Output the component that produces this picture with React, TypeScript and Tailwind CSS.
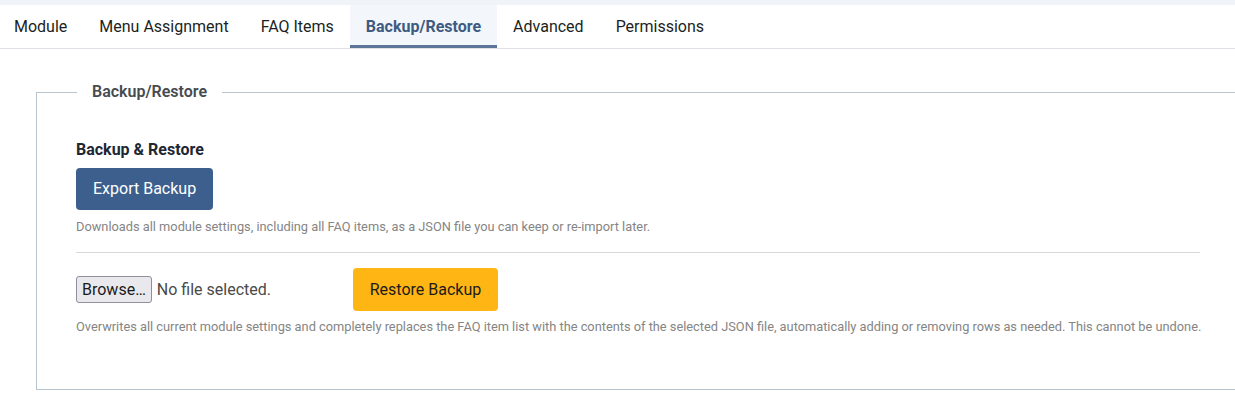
import { useState } from "react";

const tabs = ["Module", "Menu Assignment", "FAQ Items", "Backup/Restore", "Advanced", "Permissions"];

export default function App() {
  const [active, setActive] = useState("Backup/Restore");

  return (
    <div className="w-[1235px] h-[397px] overflow-hidden bg-white font-['Roboto',sans-serif] text-[#22262a]">
      <div className="h-[5px] bg-[#f0f4f9]" />

      {/* tabs */}
      <nav className="flex h-[44px] border-b border-[#dfe3e7]">
        {tabs.map((t, i) => {
          const isActive = t === active;
          return (
            <button
              key={t}
              onClick={() => setActive(t)}
              className={`h-[43px] pt-[3px] px-4 text-[16px] border-b-[3px] ${i === 0 ? "-ml-[2px]" : ""} ${
                isActive
                  ? "bg-[#f3f6fa] border-[#5b7497] text-[#3e5b82] font-bold"
                  : "border-transparent text-[#1b1f23]"
              }`}
            >
              {t}
            </button>
          );
        })}
      </nav>

      {/* backup panel */}
      <fieldset className="mt-[31px] ml-[36px] w-[1240px] border border-[#b9c6d0] pl-[39px] pr-[39px] pt-[34px] pb-[53px]">
        <legend className="ml-[1px] px-[15px] text-[16px] leading-6 font-semibold text-[#464b50]">Backup/Restore</legend>

        <h3 className="text-[16px] leading-6 font-bold text-[#1f2733]">Backup &amp; Restore</h3>
        <button className="mt-[6px] h-[42px] px-[17px] rounded-[4px] bg-[#3d5f8d] text-white text-[16px]">
          Export Backup
        </button>
        <p className="mt-[7px] text-[12.8px] leading-[19px] text-[#858585]">
          Downloads all module settings, including all FAQ items, as a JSON file you can keep or re-import later.
        </p>

        <hr className="mt-[16px] w-[1124px] border-t border-[#d6d9dc]" />

        <div className="mt-[15px] flex items-center">
          <div className="flex items-center w-[277px]">
            <span className="h-[27px] px-[5px] flex items-center border border-[#8f8f9d] rounded-[3px] bg-[#e9e9ed] text-[16px] text-[#1b1b1b]">
              Browse…
            </span>
            <span className="ml-[5px] text-[16px] text-[#4a4a4a]">No file selected.</span>
          </div>
          <button className="h-[43px] w-[145px] rounded-[4px] bg-[#ffb514] text-[#1b1b1b] text-[16px]">
            Restore Backup
          </button>
        </div>
        <p className="mt-[6px] text-[12.8px] leading-[19px] text-[#858585]">
          Overwrites all current module settings and completely replaces the FAQ item list with the contents of the selected JSON file, automatically adding or removing rows as needed. This cannot be undone.
        </p>
      </fieldset>
    </div>
  );
}
